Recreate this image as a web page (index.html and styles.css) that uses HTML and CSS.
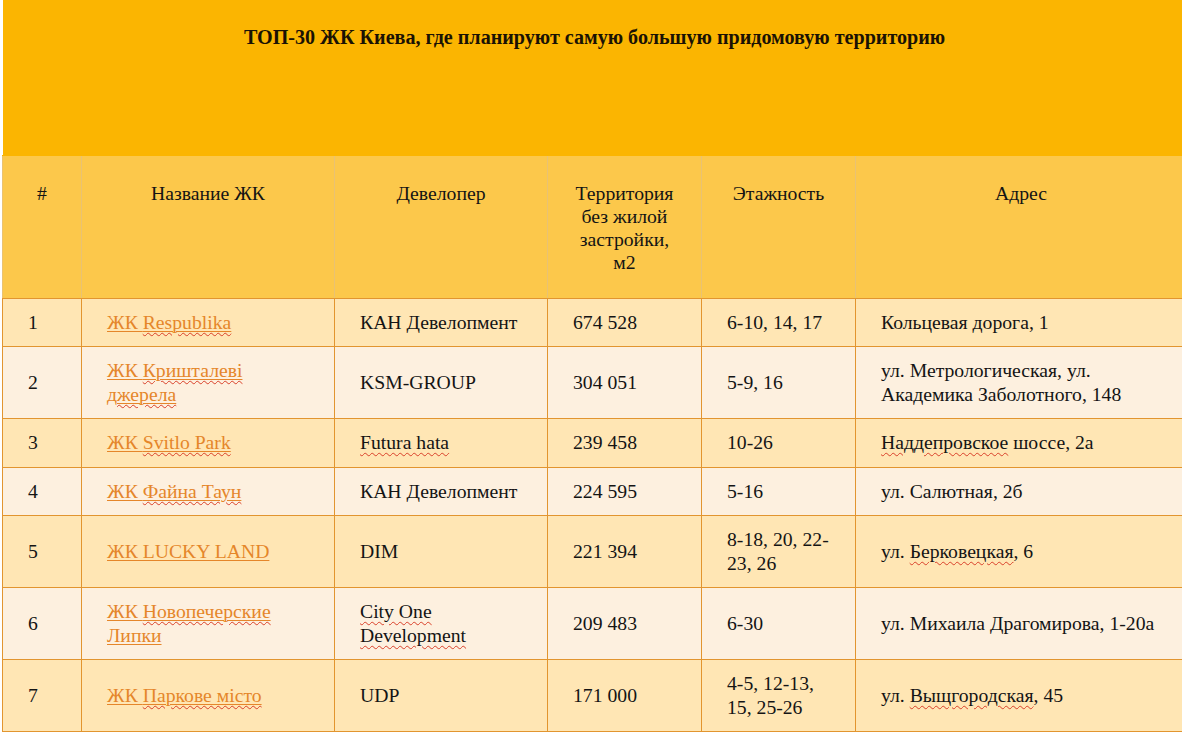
FILE: index.html
```html
<!DOCTYPE html>
<html lang="ru">
<head>
<meta charset="utf-8">
<title>ТОП-30 ЖК Киева</title>
<link rel="stylesheet" href="styles.css">
</head>
<body>
<table class="top">
  <colgroup>
    <col class="c1"><col class="c2"><col class="c3"><col class="c4"><col class="c5"><col class="c6">
  </colgroup>
  <thead>
    <tr class="title-row">
      <th colspan="6" class="title">ТОП-30 ЖК Киева, где планируют самую большую придомовую территорию</th>
    </tr>
    <tr class="head-row">
      <th>#</th>
      <th>Название ЖК</th>
      <th>Девелопер</th>
      <th>Территория<br>без жилой<br>застройки,<br>м2</th>
      <th>Этажность</th>
      <th>Адрес</th>
    </tr>
  </thead>
  <tbody>
    <tr class="odd">
      <td>1</td>
      <td><a href="#">ЖК <span class="sp">Respublika</span></a></td>
      <td>КАН Девелопмент</td>
      <td>674 528</td>
      <td>6-10, 14, 17</td>
      <td>Кольцевая дорога, 1</td>
    </tr>
    <tr class="even">
      <td>2</td>
      <td><a href="#">ЖК <span class="sp">Кришталеві</span><br><span class="sp">джерела</span></a></td>
      <td>KSM-GROUP</td>
      <td>304 051</td>
      <td>5-9, 16</td>
      <td>ул. Метрологическая, ул.<br>Академика Заболотного, 148</td>
    </tr>
    <tr class="odd">
      <td>3</td>
      <td><a href="#">ЖК <span class="sp">Svitlo Park</span></a></td>
      <td><span class="sp">Futura hata</span></td>
      <td>239 458</td>
      <td>10-26</td>
      <td><span class="sp">Наддепровское</span> шоссе, 2а</td>
    </tr>
    <tr class="even">
      <td>4</td>
      <td><a href="#">ЖК <span class="sp">Файна Таун</span></a></td>
      <td>КАН Девелопмент</td>
      <td>224 595</td>
      <td>5-16</td>
      <td>ул. Салютная, 2б</td>
    </tr>
    <tr class="odd">
      <td>5</td>
      <td><a href="#">ЖК LUCKY LAND</a></td>
      <td>DIM</td>
      <td>221 394</td>
      <td>8-18, 20, 22-<br>23, 26</td>
      <td>ул. <span class="sp">Берковецкая</span>, 6</td>
    </tr>
    <tr class="even">
      <td>6</td>
      <td><a href="#">ЖК <span class="sp">Новопечерские</span><br>Липки</a></td>
      <td><span class="sp">City One</span><br><span class="sp">Development</span></td>
      <td>209 483</td>
      <td>6-30</td>
      <td>ул. Михаила Драгомирова, 1-20а</td>
    </tr>
    <tr class="odd">
      <td>7</td>
      <td><a href="#">ЖК <span class="sp">Паркове місто</span></a></td>
      <td>UDP</td>
      <td>171 000</td>
      <td>4-5, 12-13,<br>15, 25-26</td>
      <td>ул. <span class="sp">Выщгородская</span>, 45</td>
    </tr>
  </tbody>
</table>
</body>
</html>
```

FILE: styles.css
```css
html, body {
  margin: 0;
  padding: 0;
  background: #ffffff;
  overflow: hidden;
}

body {
  font-family: "Liberation Serif", "Times New Roman", serif;
  font-size: 19.7px;
  color: #141414;
  width: 1182px;
  height: 733px;
}

.top {
  border-collapse: collapse;
  table-layout: fixed;
  width: 1184px;
  margin-left: 2px;
}

.c1 { width: 79px; }
.c2 { width: 253px; }
.c3 { width: 213px; }
.c4 { width: 154px; }
.c5 { width: 154px; }
.c6 { width: 331px; }

.title-row .title {
  background: #fbb501;
  height: 155px;
  padding: 26px 0 0 0;
  box-sizing: border-box;
  vertical-align: top;
  text-align: center;
  font-weight: bold;
  font-size: 20.1px;
  line-height: 23px;
  color: #1a1204;
  border: none;
  border-bottom: 1px solid #fbb501;
}

.head-row th {
  background: #fcc84b;
  font-weight: normal;
  vertical-align: top;
  text-align: center;
  line-height: 23.3px;
  padding: 26px 4px 23px 4px;
  border-left: 1px solid #e9c273;
  border-right: 1px solid #e9c273;
  border-bottom: 1px solid #e2952f;
  border-top: none;
}

tbody td {
  border: 1px solid #e2952f;
  padding: 12px 6px 12px 25px;
  line-height: 23.5px;
  vertical-align: middle;
  text-align: left;
}

tbody tr.odd td { background: #ffe6b4; }
tbody tr.even td { background: #fdf0df; }

a {
  color: #e5862a;
  text-decoration: underline solid #e5862a;
  text-decoration-thickness: 1px;
  text-underline-offset: 2px;
}

.sp {
  text-decoration: underline wavy #d9402a;
  text-decoration-thickness: 1px;
  text-underline-offset: 3px;
}
```
